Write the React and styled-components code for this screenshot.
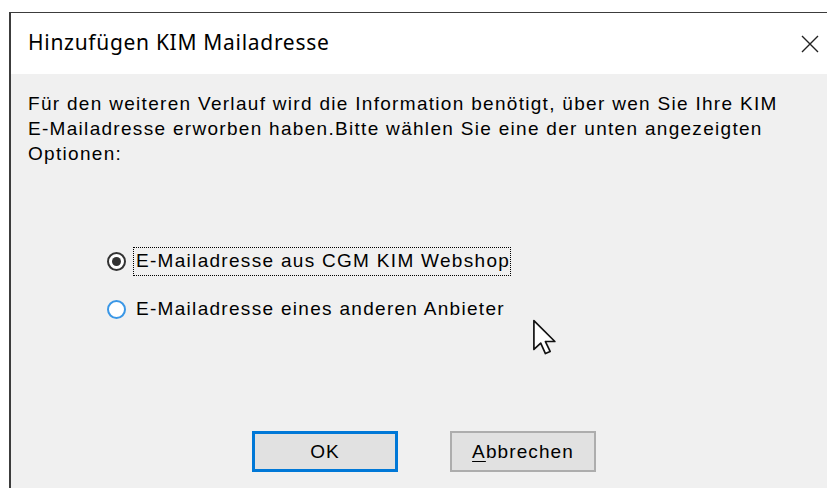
import React, { useState } from "react"
import styled, { createGlobalStyle } from "styled-components"

const Global = createGlobalStyle`
  html, body {
    margin: 0;
    padding: 0;
    background: #ffffff;
    overflow: hidden;
  }
`

const Screen = styled.div`
  width: 827px;
  height: 488px;
  overflow: hidden;
  position: relative;
  padding: 12px 0 0 9px;
  box-sizing: border-box;
`

const Window = styled.div`
  width: 840px;
  height: 500px;
  border: 1px solid #3c3c3c;
  border-width: 1px 0 0 2px;
  display: flex;
  flex-direction: column;
  background: #f0f0f0;
`

const TitleBar = styled.div`
  height: 61px;
  flex: none;
  background: #ffffff;
  display: flex;
  align-items: center;
  justify-content: space-between;
  padding: 0 0 0 17px;
  box-sizing: border-box;
`

const Title = styled.div`
  font-family: "Noto Sans", "Open Sans", sans-serif;
  font-size: 21px;
  letter-spacing: 0.7px;
  color: #000;
  margin-top: -3px;
`

const CloseButton = styled.div`
  width: 44px;
  height: 44px;
  margin-right: 19px;
  display: flex;
  align-items: center;
  justify-content: center;
`

const Body = styled.div`
  flex: 1;
  padding: 17px 0 0 17px;
  font-family: "Liberation Sans", Arial, sans-serif;
  font-size: 19px;
  letter-spacing: 1.3px;
  color: #000;
`

const Message = styled.p`
  margin: 0;
  width: 800px;
  white-space: nowrap;
  line-height: 25px;
`

const Options = styled.div`
  margin: 80px 0 0 79px;
  display: flex;
  flex-direction: column;
  gap: 18px;
`

const Option = styled.label`
  display: flex;
  align-items: center;
  gap: 7px;
  height: 30px;
`

const RadioDot = styled.span`
  width: 19px;
  height: 19px;
  border-radius: 50%;
  box-sizing: border-box;
  background: #fff;
  border: 2px solid ${(p) => (p.$checked ? "#333" : "#3a97e6")};
  display: flex;
  align-items: center;
  justify-content: center;
  flex: none;

  &::after {
    content: "";
    width: 9px;
    height: 9px;
    border-radius: 50%;
    background: ${(p) => (p.$checked ? "#333" : "transparent")};
  }
`

const OptionText = styled.span`
  height: 29px;
  box-sizing: border-box;
  display: flex;
  align-items: center;
  padding: 0 0 0 2px;
  border: 1px dotted ${(p) => (p.$focused ? "#000" : "transparent")};
`

const ButtonRow = styled.div`
  margin: 107px 0 0 224px;
  display: flex;
  gap: 52px;
`

const Button = styled.button`
  width: 146px;
  height: 41px;
  box-sizing: border-box;
  background: #e1e1e1;
  border: ${(p) => (p.$default ? "3px solid #0078d7" : "2px solid #adadad")};
  font-family: "Liberation Sans", Arial, sans-serif;
  font-size: 19px;
  letter-spacing: 1.1px;
  color: #000;
  padding: 0;
  u {
    text-decoration: underline;
    text-underline-offset: 3px;
  }
`

const Cursor = styled.svg`
  position: absolute;
  left: 532px;
  top: 319px;
`

export default function App() {
  const [choice, setChoice] = useState(0)
  const options = [
    "E-Mailadresse aus CGM KIM Webshop",
    "E-Mailadresse eines anderen Anbieter",
  ]

  return (
    <Screen>
      <Global />
      <Window>
        <TitleBar>
          <Title>Hinzufügen KIM Mailadresse</Title>
          <CloseButton>
            <svg width="18" height="18" viewBox="0 0 18 18">
              <path d="M1 1 L17 17 M17 1 L1 17" stroke="#222" strokeWidth="1.4" />
            </svg>
          </CloseButton>
        </TitleBar>
        <Body>
          <Message>
            Für den weiteren Verlauf wird die Information benötigt, über wen Sie Ihre KIM
            <br />
            E-Mailadresse erworben haben.Bitte wählen Sie eine der unten angezeigten
            <br />
            Optionen:
          </Message>
          <Options>
            {options.map((text, i) => (
              <Option key={text} onClick={() => setChoice(i)}>
                <RadioDot $checked={choice === i} />
                <OptionText $focused={choice === i}>{text}</OptionText>
              </Option>
            ))}
          </Options>
          <ButtonRow>
            <Button $default>OK</Button>
            <Button>
              <u>A</u>bbrechen
            </Button>
          </ButtonRow>
        </Body>
      </Window>
      <Cursor width="30" height="44" viewBox="0 0 28 42">
        <path
          d="M1.5 1.5 L1.5 29 L8 23 L12.5 33 L17 31 L12.5 21.5 L21.5 21.5 Z"
          fill="#fff"
          stroke="#111"
          strokeWidth="1.6"
          strokeLinejoin="round"
        />
      </Cursor>
    </Screen>
  )
}
